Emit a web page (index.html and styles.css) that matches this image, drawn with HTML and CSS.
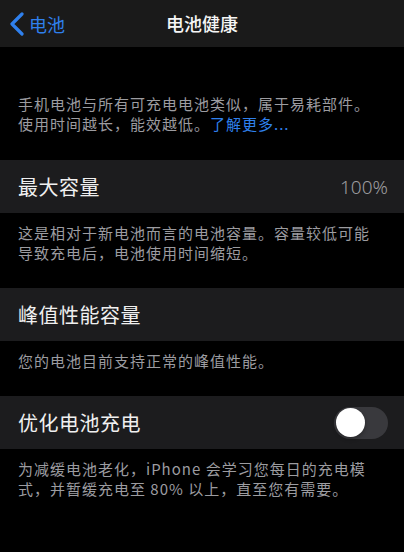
FILE: index.html
```html
<!DOCTYPE html>
<html lang="zh-CN">
<head>
<meta charset="utf-8">
<link rel="stylesheet" href="styles.css">
</head>
<body>
<div class="page">
  <header class="nav">
    <div class="back">
      <svg class="chev" width="16" height="24" viewBox="0 0 16 24"><path d="M13 2 L3 12 L13 22" fill="none" stroke="#2f80ed" stroke-width="3.2" stroke-linecap="round" stroke-linejoin="round"/></svg>
      <span>电池</span>
    </div>
    <div class="title">电池健康</div>
  </header>
  <section class="intro">
    <p>手机电池与所有可充电电池类似，属于易耗部件。</p>
    <p>使用时间越长，能效越低。<span class="link">了解更多...</span></p>
  </section>
  <div class="row">
    <span class="label">最大容量</span>
    <span class="value">100%</span>
  </div>
  <section class="note">
    <p>这是相对于新电池而言的电池容量。容量较低可能导致充电后，电池使用时间缩短。</p>
  </section>
  <div class="row">
    <span class="label">峰值性能容量</span>
  </div>
  <section class="note">
    <p>您的电池目前支持正常的峰值性能。</p>
  </section>
  <div class="row">
    <span class="label">优化电池充电</span>
    <span class="toggle"><span class="knob"></span></span>
  </div>
  <section class="note">
    <p>为减缓电池老化，iPhone 会学习您每日的充电模式，并暂缓充电至 80% 以上，直至您有需要。</p>
  </section>
</div>
</body>
</html>
```

FILE: styles.css
```css
* { box-sizing: border-box; }
html, body {
  margin: 0;
  padding: 0;
  background: #000;
}
body {
  font-family: "Noto Sans CJK SC", "Noto Sans", sans-serif;
  color: #f2f2f2;
}
.page {
  width: 404px;
  height: 552px;
  overflow: hidden;
  background: #000;
}
.nav {
  height: 47px;
  background: #1a1a1a;
  display: flex;
  align-items: center;
  justify-content: center;
  position: relative;
}
.back {
  position: absolute;
  left: 9px;
  top: 12px;
  display: flex;
  align-items: center;
  gap: 4px;
  color: #2f80ed;
  font-size: 18px;
  line-height: 24px;
}
.chev { display: block; }
.title {
  font-size: 18px;
  font-weight: 500;
  color: #f5f5f5;
  line-height: 24px;
  margin-top: -1px;
}
p {
  margin: 0;
  font-size: 15px;
  line-height: 20px;
  letter-spacing: 1px;
  color: #9c9ca0;
}
.link { color: #2f80ed; }
.intro {
  padding: 47px 20px 26px 18px;
}
.note {
  padding: 10px 20px 25px 18px;
}
.row {
  height: 53px;
  background: #1c1c1e;
  display: flex;
  align-items: center;
  justify-content: space-between;
  padding: 0 16px 0 18px;
}
.label {
  font-size: 20px;
  letter-spacing: 0.5px;
  color: #f0f0f0;
}
.value {
  font-size: 19px;
  font-weight: 300;
  color: #9c9ca0;
  font-family: "Noto Sans", sans-serif;
}
.toggle {
  width: 54px;
  height: 32px;
  border-radius: 16px;
  background: #39393d;
  display: flex;
  align-items: center;
  padding: 0 2px;
}
.knob {
  width: 29px;
  height: 29px;
  border-radius: 50%;
  background: #fff;
  box-shadow: 0 2px 4px rgba(0,0,0,0.3);
}
```
